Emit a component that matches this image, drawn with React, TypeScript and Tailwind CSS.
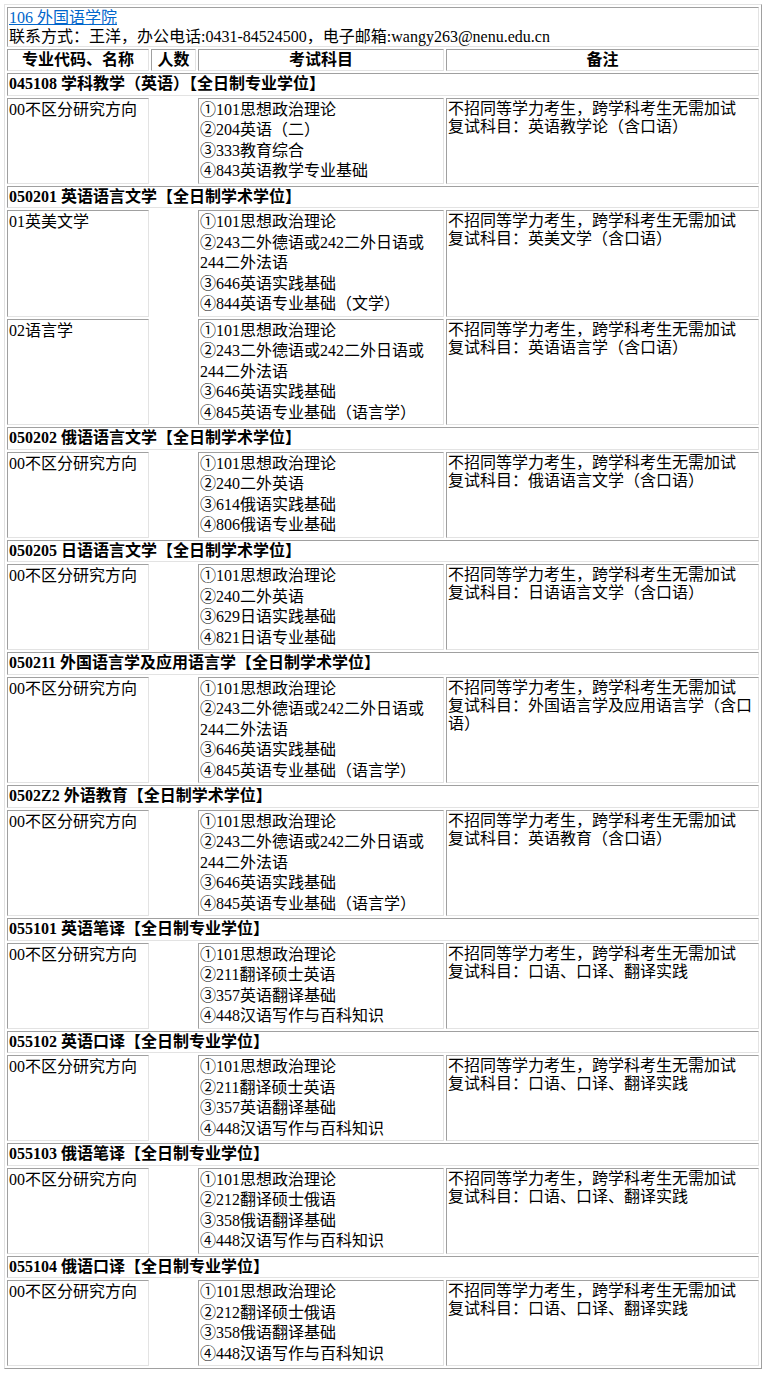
import React from "react";

type Row = { dir: string; subjects: string[]; remarks: string[] };
type Section = { title: string; rows: Row[] };

const R1 = "不招同等学力考生，跨学科考生无需加试";

const en5 = (last: string) => [
  "①101思想政治理论",
  "②243二外德语或242二外日语或",
  "244二外法语",
  "③646英语实践基础",
  last,
];

const sections: Section[] = [
  {
    title: "045108 学科教学（英语）【全日制专业学位】",
    rows: [
      {
        dir: "00不区分研究方向",
        subjects: ["①101思想政治理论", "②204英语（二）", "③333教育综合", "④843英语教学专业基础"],
        remarks: [R1, "复试科目：英语教学论（含口语）"],
      },
    ],
  },
  {
    title: "050201 英语语言文学【全日制学术学位】",
    rows: [
      { dir: "01英美文学", subjects: en5("④844英语专业基础（文学）"), remarks: [R1, "复试科目：英美文学（含口语）"] },
      { dir: "02语言学", subjects: en5("④845英语专业基础（语言学）"), remarks: [R1, "复试科目：英语语言学（含口语）"] },
    ],
  },
  {
    title: "050202 俄语语言文学【全日制学术学位】",
    rows: [
      {
        dir: "00不区分研究方向",
        subjects: ["①101思想政治理论", "②240二外英语", "③614俄语实践基础", "④806俄语专业基础"],
        remarks: [R1, "复试科目：俄语语言文学（含口语）"],
      },
    ],
  },
  {
    title: "050205 日语语言文学【全日制学术学位】",
    rows: [
      {
        dir: "00不区分研究方向",
        subjects: ["①101思想政治理论", "②240二外英语", "③629日语实践基础", "④821日语专业基础"],
        remarks: [R1, "复试科目：日语语言文学（含口语）"],
      },
    ],
  },
  {
    title: "050211 外国语言学及应用语言学【全日制学术学位】",
    rows: [
      {
        dir: "00不区分研究方向",
        subjects: en5("④845英语专业基础（语言学）"),
        remarks: [R1, "复试科目：外国语言学及应用语言学（含口", "语）"],
      },
    ],
  },
  {
    title: "0502Z2 外语教育【全日制学术学位】",
    rows: [
      { dir: "00不区分研究方向", subjects: en5("④845英语专业基础（语言学）"), remarks: [R1, "复试科目：英语教育（含口语）"] },
    ],
  },
  {
    title: "055101 英语笔译【全日制专业学位】",
    rows: [
      {
        dir: "00不区分研究方向",
        subjects: ["①101思想政治理论", "②211翻译硕士英语", "③357英语翻译基础", "④448汉语写作与百科知识"],
        remarks: [R1, "复试科目：口语、口译、翻译实践"],
      },
    ],
  },
  {
    title: "055102 英语口译【全日制专业学位】",
    rows: [
      {
        dir: "00不区分研究方向",
        subjects: ["①101思想政治理论", "②211翻译硕士英语", "③357英语翻译基础", "④448汉语写作与百科知识"],
        remarks: [R1, "复试科目：口语、口译、翻译实践"],
      },
    ],
  },
  {
    title: "055103 俄语笔译【全日制专业学位】",
    rows: [
      {
        dir: "00不区分研究方向",
        subjects: ["①101思想政治理论", "②212翻译硕士俄语", "③358俄语翻译基础", "④448汉语写作与百科知识"],
        remarks: [R1, "复试科目：口语、口译、翻译实践"],
      },
    ],
  },
  {
    title: "055104 俄语口译【全日制专业学位】",
    rows: [
      {
        dir: "00不区分研究方向",
        subjects: ["①101思想政治理论", "②212翻译硕士俄语", "③358俄语翻译基础", "④448汉语写作与百科知识"],
        remarks: [R1, "复试科目：口语、口译、翻译实践"],
      },
    ],
  },
];

const cell =
  "border border-solid border-t-[#a0a0a0] border-l-[#a0a0a0] border-b-[#e3e3e3] border-r-[#e3e3e3] px-[1px]";

export default function App() {
  return (
    <div
      className="bg-white text-black text-[16px] pt-[4px] pl-[4px] pb-[20px]"
      style={{ fontFamily: '"Liberation Serif", "Noto Sans CJK SC", serif' }}
    >
      <table className="table-fixed w-[758px] border-separate border-spacing-[2px] border border-solid border-t-[#e3e3e3] border-l-[#e3e3e3] border-b-[#a0a0a0] border-r-[#a0a0a0]">
        <colgroup>
          <col className="w-[142px]" />
          <col className="w-[45px]" />
          <col className="w-[246px]" />
          <col className="w-[313px]" />
        </colgroup>
        <tbody>
          <tr>
            <td colSpan={4} className={`${cell} leading-[19px] py-0 align-top`}>
              <a href="#" className="text-[#0066cc] underline">
                106 外国语学院
              </a>
              <br />
              联系方式：王洋，办公电话:0431-84524500，电子邮箱:wangy263@nenu.edu.cn
            </td>
          </tr>
          <tr>
            <td className={`${cell} font-bold text-center leading-[20px] py-0`}>专业代码、名称</td>
            <td className={`${cell} font-bold text-center leading-[20px] py-0`}>人数</td>
            <td className={`${cell} font-bold text-center leading-[20px] py-0`}>考试科目</td>
            <td className={`${cell} font-bold text-center leading-[20px] py-0`}>备注</td>
          </tr>
          {sections.map((s) => (
            <React.Fragment key={s.title}>
              <tr>
                <td colSpan={4} className={`${cell} font-bold leading-[20.5px] py-0 align-middle`}>
                  {s.title}
                </td>
              </tr>
              {s.rows.map((r) => (
                <tr key={r.dir + r.subjects[4]}>
                  <td className={`${cell} align-top leading-[20.5px] py-[1px]`}>{r.dir}</td>
                  <td className="p-0"></td>
                  <td className={`${cell} align-top leading-[20.5px] py-[1px]`}>
                    {r.subjects.map((l) => (
                      <div key={l} className="whitespace-nowrap">
                        {l}
                      </div>
                    ))}
                  </td>
                  <td className={`${cell} align-top leading-[18px] py-[1px]`}>
                    {r.remarks.map((l) => (
                      <div key={l} className="whitespace-nowrap">
                        {l}
                      </div>
                    ))}
                  </td>
                </tr>
              ))}
            </React.Fragment>
          ))}
        </tbody>
      </table>
    </div>
  );
}
